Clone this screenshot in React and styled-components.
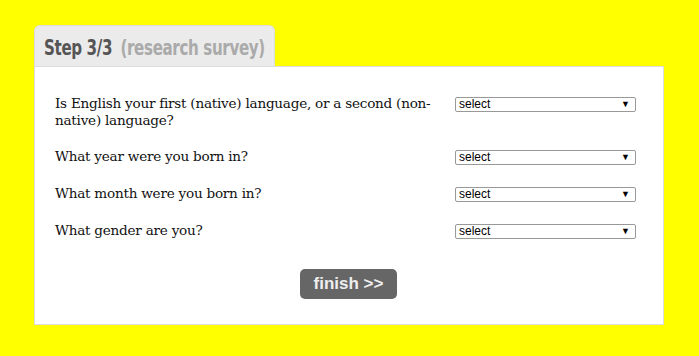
import React from 'react';
import styled, { createGlobalStyle } from 'styled-components';

const GlobalStyle = createGlobalStyle`
  html, body {
    margin: 0;
    background: #ffff00;
  }
`;

const Page = styled.div`
  padding: 25px 0 30px 34px;
`;

const Tab = styled.div`
  display: flex;
  align-items: center;
  box-sizing: border-box;
  width: 241px;
  height: 42px;
  padding: 2px 0 0 9px;
  margin-bottom: -1px;
  background: #ebebeb;
  border: 1px solid #dddddd;
  border-bottom: none;
  border-radius: 6px 6px 0 0;
  overflow: hidden;
`;

const Title = styled.div`
  display: inline-flex;
  gap: 11px;
  white-space: nowrap;
  transform: scaleX(0.765);
  transform-origin: left center;
  font-family: "DejaVu Sans", sans-serif;
  font-stretch: condensed;
  font-weight: bold;
  font-size: 22px;
  letter-spacing: -0.5px;
`;

const TabPart = styled.span`
  color: ${(props) => (props.muted ? '#aaaaaa' : '#555555')};
`;

const Panel = styled.div`
  box-sizing: border-box;
  width: 630px;
  padding: 28px 27px 25px 20px;
  background: #ffffff;
  border: 1px solid #dddddd;
`;

const Questions = styled.div`
  display: flex;
  flex-direction: column;
  gap: 19px;
`;

const Row = styled.div`
  display: grid;
  grid-template-columns: 1fr 181px;
  column-gap: 15px;
  align-items: start;
  min-height: 18px;
`;

const Question = styled.div`
  font-family: "DejaVu Serif", serif;
  font-size: 13.6px;
  line-height: 17px;
  letter-spacing: -0.25px;
  color: #111111;
`;

const SelectWrap = styled.div`
  position: relative;
  margin-top: 2px;
`;

const Select = styled.select`
  appearance: none;
  display: block;
  box-sizing: border-box;
  width: 181px;
  height: 15px;
  padding: 0 0 0 3px;
  margin: 0;
  background: #ffffff;
  border: 1px solid #999999;
  border-radius: 2px;
  font-family: "Liberation Sans", Arial, sans-serif;
  font-size: 12px;
  line-height: 13px;
  color: #000000;
`;

const Arrow = styled.span`
  position: absolute;
  right: 6px;
  top: 1px;
  font-size: 9px;
  line-height: 13px;
  color: #000000;
  pointer-events: none;
`;

const Footer = styled.div`
  display: flex;
  justify-content: center;
  padding-top: 29px;
  padding-left: 6px;
`;

const Button = styled.button`
  width: 97px;
  height: 30px;
  padding: 0;
  background: #666666;
  border: none;
  border-radius: 5px;
  font-family: "Liberation Sans", Arial, sans-serif;
  font-weight: bold;
  font-size: 17px;
  color: #eeeeee;
  cursor: pointer;
`;

const questions = [
  'Is English your first (native) language, or a second (non-native) language?',
  'What year were you born in?',
  'What month were you born in?',
  'What gender are you?',
];

const Dropdown = () => (
  <SelectWrap>
    <Select defaultValue="">
      <option value="">select</option>
    </Select>
    <Arrow>▼</Arrow>
  </SelectWrap>
);

export default function App() {
  return (
    <>
      <GlobalStyle />
      <Page>
        <Tab>
          <Title>
            <TabPart>Step 3/3</TabPart>
            <TabPart muted>(research survey)</TabPart>
          </Title>
        </Tab>
        <Panel>
          <Questions>
            {questions.map((q) => (
              <Row key={q}>
                <Question>{q}</Question>
                <Dropdown />
              </Row>
            ))}
          </Questions>
          <Footer>
            <Button>finish &gt;&gt;</Button>
          </Footer>
        </Panel>
      </Page>
    </>
  );
}
